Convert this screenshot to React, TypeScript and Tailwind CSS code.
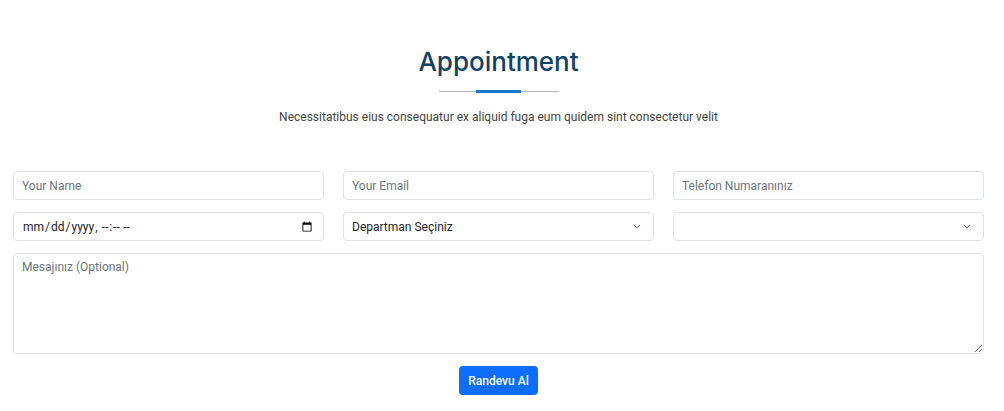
export default function App() {
  const field =
    "h-[29px] w-full rounded-[4px] border border-[#dee2e6] bg-white px-2 text-[12px] text-[#212529] placeholder:text-[#6c757d] outline-none";
  return (
    <div className="min-h-[411px] bg-white font-['Roboto',sans-serif]">
      <section className="pl-[13px] pr-5 pt-[44px]">
        {/* Section title */}
        <div className="flex flex-col items-center">
          <h2 className="font-['Inter',sans-serif] text-[26px] font-medium leading-9 text-[#124265]">
            Appointment
          </h2>
          <div className="relative mt-[10px] h-[3px] w-[120px]">
            <div className="absolute left-0 top-[1px] h-px w-full bg-[#b7b7b7]"></div>
            <div className="absolute left-[37px] top-0 h-[3px] w-[45px] bg-[#1977cc]"></div>
          </div>
          <p className="mt-[14px] text-[12px] leading-5 text-[#444444]">
            Necessitatibus eius consequatur ex aliquid fuga eum quidem sint consectetur velit
          </p>
        </div>

        {/* Form */}
        <form className="mt-[44px]">
          <div className="grid grid-cols-3 gap-x-[19px] gap-y-[12px]">
            <input className={field} placeholder="Your Name" />
            <input className={field} placeholder="Your Email" />
            <input className={field} placeholder="Telefon Numaranınız" />
            <input type="datetime-local" className={field} />
            <div className="relative">
              <select className={field + " appearance-none"}>
                <option>Departman Seçiniz</option>
              </select>
              <svg className="pointer-events-none absolute right-[12px] top-[11px]" width="10" height="7" viewBox="0 0 16 16" fill="none" stroke="#343a40" strokeWidth="2" strokeLinecap="round" strokeLinejoin="round">
                <path d="m2 5 6 6 6-6" />
              </svg>
            </div>
            <div className="relative">
              <select className={field + " appearance-none"}>
                <option></option>
              </select>
              <svg className="pointer-events-none absolute right-[12px] top-[11px]" width="10" height="7" viewBox="0 0 16 16" fill="none" stroke="#343a40" strokeWidth="2" strokeLinecap="round" strokeLinejoin="round">
                <path d="m2 5 6 6 6-6" />
              </svg>
            </div>
          </div>
          <textarea
            rows={5}
            className="mt-[12px] block h-[101px] w-full rounded-[4px] border border-[#dee2e6] bg-white px-2 py-1 text-[12px] text-[#212529] placeholder:text-[#6c757d] outline-none"
            placeholder="Mesajınız (Optional)"
          ></textarea>
          <div className="mt-[12px] flex justify-center">
            <button
              type="button"
              className="h-[29px] rounded-[4px] bg-[#0d6efd] px-[9px] text-[12px] font-medium text-white"
            >
              Randevu Al
            </button>
          </div>
        </form>
      </section>
    </div>
  );
}
